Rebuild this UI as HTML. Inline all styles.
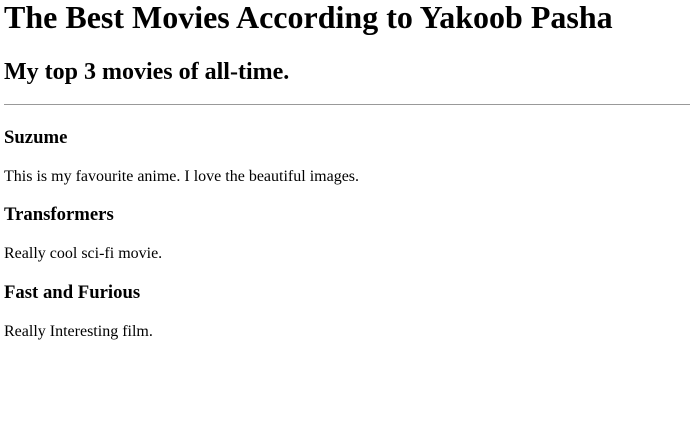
<!DOCTYPE html>
<html><head><style>
body{margin:0 4px;font-family:"Liberation Serif",serif;color:#000;background:#fff}
h1{margin:-1px 0 23px;font-size:32px}
h2{margin-bottom:18px}
hr{border:0;border-top:1px solid #999;margin:0 -1px 22px 0}
</style></head><body>
<h1>The Best Movies According to Yakoob Pasha</h1>
<h2>My top 3 movies of all-time.</h2>
<hr>
<h3>Suzume</h3>
<p>This is my favourite anime. I love the beautiful images.</p>
<h3>Transformers</h3>
<p>Really cool sci-fi movie.</p>
<h3>Fast and Furious</h3>
<p>Really Interesting film.</p>
</body></html>
